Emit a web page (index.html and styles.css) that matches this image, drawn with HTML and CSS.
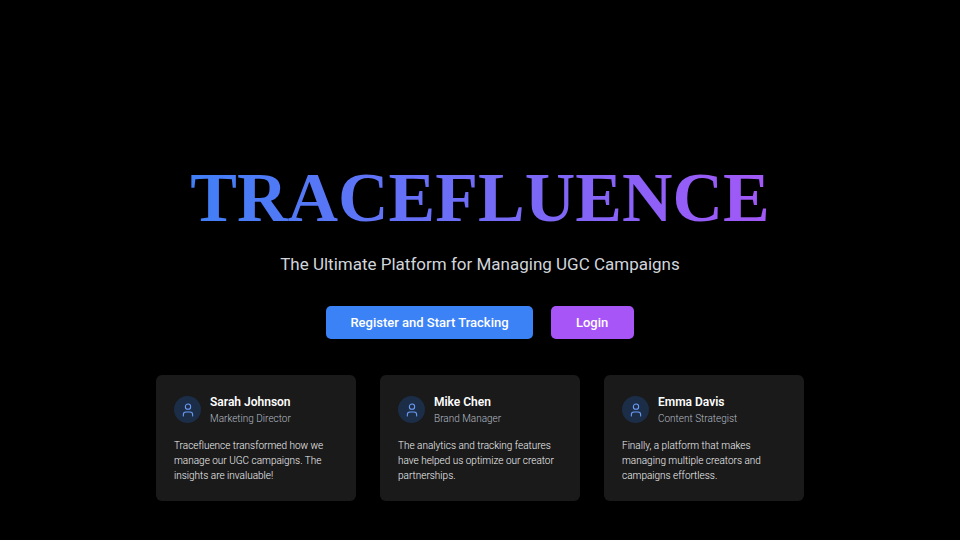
FILE: index.html
```html
<!DOCTYPE html>
<html lang="en">
<head>
  <meta charset="UTF-8">
  <meta name="viewport" content="width=device-width, initial-scale=1.0">
  <title>Tracefluence</title>
  <link rel="stylesheet" href="styles.css">
</head>
<body>
  <main class="hero">
    <h1 class="title">TRACEFLUENCE</h1>
    <p class="tagline">The Ultimate Platform for Managing UGC Campaigns</p>

    <div class="actions">
      <button type="button" class="btn btn-register">Register and Start Tracking</button>
      <button type="button" class="btn btn-login">Login</button>
    </div>

    <section class="testimonials">
      <article class="card">
        <div class="person">
          <span class="avatar">
            <svg class="icon" viewBox="0 0 24 24" aria-hidden="true"><circle cx="12" cy="7" r="4"/><path d="M19 21v-2a4 4 0 0 0-4-4H9a4 4 0 0 0-4 4v2"/></svg>
          </span>
          <div>
            <h2 class="name">Sarah Johnson</h2>
            <p class="role">Marketing Director</p>
          </div>
        </div>
        <p class="quote">Tracefluence transformed how we manage our UGC campaigns. The insights are invaluable!</p>
      </article>

      <article class="card">
        <div class="person">
          <span class="avatar">
            <svg class="icon" viewBox="0 0 24 24" aria-hidden="true"><circle cx="12" cy="7" r="4"/><path d="M19 21v-2a4 4 0 0 0-4-4H9a4 4 0 0 0-4 4v2"/></svg>
          </span>
          <div>
            <h2 class="name">Mike Chen</h2>
            <p class="role">Brand Manager</p>
          </div>
        </div>
        <p class="quote">The analytics and tracking features have helped us optimize our creator partnerships.</p>
      </article>

      <article class="card">
        <div class="person">
          <span class="avatar">
            <svg class="icon" viewBox="0 0 24 24" aria-hidden="true"><circle cx="12" cy="7" r="4"/><path d="M19 21v-2a4 4 0 0 0-4-4H9a4 4 0 0 0-4 4v2"/></svg>
          </span>
          <div>
            <h2 class="name">Emma Davis</h2>
            <p class="role">Content Strategist</p>
          </div>
        </div>
        <p class="quote">Finally, a platform that makes managing multiple creators and campaigns effortless.</p>
      </article>
    </section>
  </main>
</body>
</html>
```
FILE: styles.css
```css
* {
  box-sizing: border-box;
  margin: 0;
  padding: 0;
}
body {
  background-color: #000;
  color: #fff;
  font-family: Roboto, "Liberation Sans", sans-serif;
}
.hero {
  display: flex;
  flex-direction: column;
  align-items: center;
  min-height: 100vh;
  padding: 162px 24px 36px;
}
.title {
  width: 100%;
  max-width: 648px;
  text-align: center;
  font-family: "Liberation Serif", serif;
  font-size: 70px;
  line-height: 72px;
  font-weight: bold;
  color: transparent;
  background: linear-gradient(to right, #3b82f6, #a855f7);
  -webkit-background-clip: text;
  background-clip: text;
}
.tagline {
  margin-top: 16px;
  font-size: 17px;
  line-height: 28px;
  color: #d1d5db;
}
.actions {
  display: flex;
  gap: 18px;
  margin-top: 28px;
}
.btn {
  min-width: 83px;
  padding: 0 24px;
  border: none;
  border-radius: 5px;
  color: #fff;
  font-family: inherit;
  font-size: 13px;
  line-height: 33px;
  font-weight: 500;
  cursor: pointer;
}
.btn-register {
  background-color: #3b82f6;
}
.btn-login {
  background-color: #a855f7;
}
.testimonials {
  display: grid;
  grid-template-columns: repeat(3, 1fr);
  gap: 24px;
  width: 100%;
  max-width: 648px;
  margin-top: 36px;
}
.card {
  padding: 18px;
  border-radius: 6px;
  background-color: #1a1a1a;
}
.person {
  display: flex;
  align-items: center;
  gap: 9px;
  margin-bottom: 12px;
}
.avatar {
  display: flex;
  align-items: center;
  justify-content: center;
  width: 27px;
  height: 27px;
  border-radius: 50%;
  background-color: #1c2d48;
}
.icon {
  width: 16px;
  height: 16px;
  fill: none;
  stroke: #6c9cf5;
  stroke-width: 1.6;
  stroke-linecap: round;
  stroke-linejoin: round;
}
.name {
  font-size: 12px;
  line-height: 18px;
  font-weight: 600;
}
.role {
  font-size: 10px;
  line-height: 15px;
  font-weight: 300;
  color: #b4bac4;
}
.quote {
  font-size: 10px;
  line-height: 15px;
  font-weight: 300;
  color: #f3f4f6;
}
```
